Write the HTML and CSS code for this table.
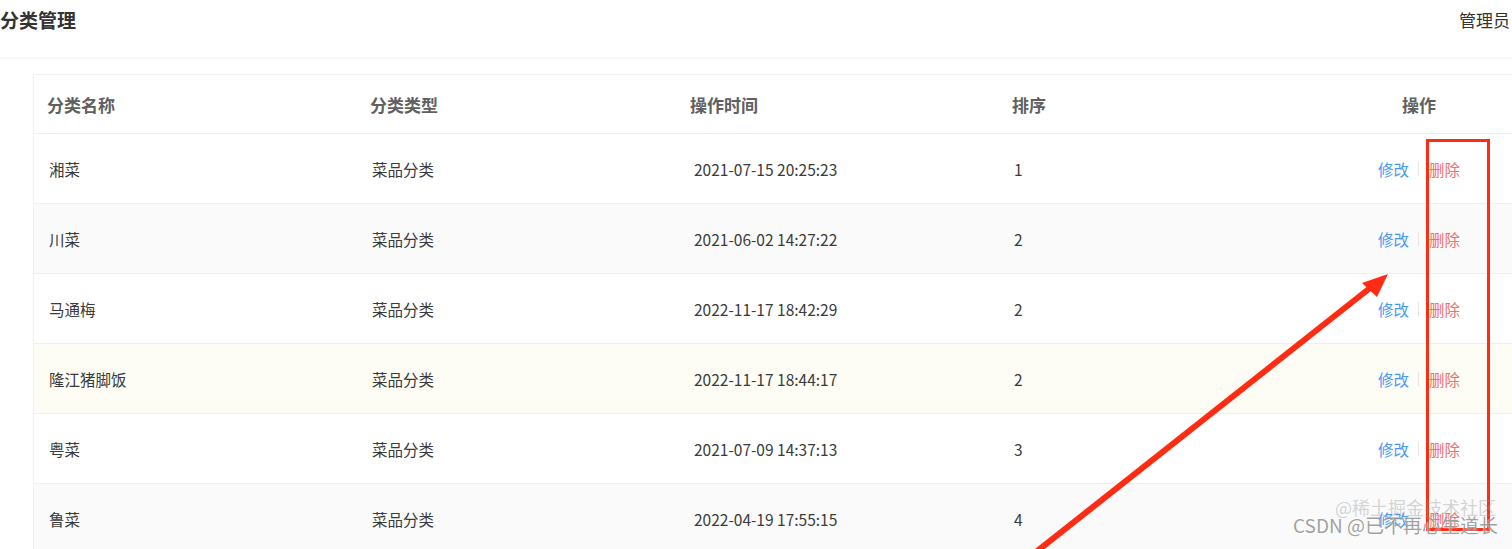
FILE: index.html
```html
<!DOCTYPE html>
<html lang="zh-CN">
<head>
    <meta charset="UTF-8">
    <meta name="viewport" content="width=device-width, initial-scale=1.0">
    <title>分类管理</title>
    <link rel="stylesheet" href="styles.css">
</head>
<body>
    <div class="topbar">
        <h1 class="title">分类管理</h1>
        <span class="user">管理员</span>
    </div>

    <div class="content">
        <div class="table-card">
            <div class="row head">
                <div class="cell">分类名称</div>
                <div class="cell">分类类型</div>
                <div class="cell">操作时间</div>
                <div class="cell">排序</div>
                <div class="cell ops">操作</div>
            </div>
            <div class="row">
                <div class="cell">湘菜</div>
                <div class="cell">菜品分类</div>
                <div class="cell time">2021-07-15 20:25:23</div>
                <div class="cell">1</div>
                <div class="cell ops"><a class="edit">修改</a><span class="sep"></span><a class="del">删除</a></div>
            </div>
            <div class="row stripe">
                <div class="cell">川菜</div>
                <div class="cell">菜品分类</div>
                <div class="cell time">2021-06-02 14:27:22</div>
                <div class="cell">2</div>
                <div class="cell ops"><a class="edit">修改</a><span class="sep"></span><a class="del">删除</a></div>
            </div>
            <div class="row">
                <div class="cell">马通梅</div>
                <div class="cell">菜品分类</div>
                <div class="cell time">2022-11-17 18:42:29</div>
                <div class="cell">2</div>
                <div class="cell ops"><a class="edit">修改</a><span class="sep"></span><a class="del">删除</a></div>
            </div>
            <div class="row hover">
                <div class="cell">隆江猪脚饭</div>
                <div class="cell">菜品分类</div>
                <div class="cell time">2022-11-17 18:44:17</div>
                <div class="cell">2</div>
                <div class="cell ops"><a class="edit">修改</a><span class="sep"></span><a class="del">删除</a></div>
            </div>
            <div class="row">
                <div class="cell">粤菜</div>
                <div class="cell">菜品分类</div>
                <div class="cell time">2021-07-09 14:37:13</div>
                <div class="cell">3</div>
                <div class="cell ops"><a class="edit">修改</a><span class="sep"></span><a class="del">删除</a></div>
            </div>
            <div class="row stripe">
                <div class="cell">鲁菜</div>
                <div class="cell">菜品分类</div>
                <div class="cell time">2022-04-19 17:55:15</div>
                <div class="cell">4</div>
                <div class="cell ops"><a class="edit">修改</a><span class="sep"></span><a class="del">删除</a></div>
            </div>
        </div>
    </div>

    <!-- annotation drawn over the screenshot -->
    <svg class="marks" width="1512" height="549" viewBox="0 0 1512 549">
        <rect x="1427.5" y="140.5" width="61" height="389" fill="none" stroke="#ff2b12" stroke-width="3"/>
        <line x1="1036" y1="552" x2="1370" y2="288" stroke="#ff2b12" stroke-width="6"/>
        <polygon points="1388,274 1362,283 1377,297" fill="#ff2b12"/>
    </svg>

    <div class="watermark">
        <span class="wm-back">@稀土掘金技术社区</span>
        <span class="wm-front">CSDN @已不再心生道长</span>
    </div>
</body>
</html>
```

FILE: styles.css
```css
body {
    margin: 0;
    padding: 0;
    font-family: "Noto Sans CJK SC", "Noto Sans", sans-serif;
    color: #333;
    background: #fff;
    width: 1512px;
    height: 549px;
    overflow: hidden;
    position: relative;
}
.topbar {
    height: 57px;
    display: flex;
    justify-content: space-between;
    align-items: flex-start;
    padding: 7px 2px 0 0;
    box-sizing: border-box;
    background: #fff;
    box-shadow: 0 2px 3px rgba(0,0,0,0.04);
}
.title {
    margin: 0;
    font-size: 19px;
    line-height: 26px;
    font-weight: bold;
    color: #333;
}
.user {
    font-size: 17px;
    line-height: 26px;
    color: #333;
}
.content {
    padding: 17px 0 0 33px;
}
.table-card {
    width: 1520px;
    background: #fff;
    border-top: 1px solid #f2f2f2;
    border-left: 1px solid #f0f0f0;
}
.row {
    display: grid;
    grid-template-columns: 323px 320px 322px 340px 160px 1fr;
    height: 69px;
    align-items: center;
    border-bottom: 1px solid #efefef;
    font-size: 15.5px;
    color: #3a3a3a;
}
.row.head {
    height: 58px;
    font-size: 17px;
    font-weight: bold;
    color: #606060;
}
.row.head .cell {
    padding-left: 13px;
}
.row.stripe {
    background: #fafafa;
}
.row.hover {
    background: #fdfdf6;
}
.cell {
    padding-left: 15px;
    white-space: nowrap;
}
.cell.time {
    padding-left: 17px;
}
.cell.ops, .row.head .cell.ops {
    padding-left: 0;
    text-align: center;
    display: flex;
    justify-content: center;
    align-items: center;
}
.edit {
    color: #4a9af5;
}
.del {
    color: #f26d6d;
}
.sep {
    display: inline-block;
    width: 1px;
    height: 14px;
    background: #e6e6e6;
    margin: 0 10px 0 9px;
}
.marks {
    position: absolute;
    left: 0;
    top: 0;
    pointer-events: none;
}
.watermark {
    position: absolute;
    right: 14px;
    bottom: 11px;
    width: 230px;
    height: 44px;
    font-family: "Noto Sans CJK SC", sans-serif;
    pointer-events: none;
}
.wm-back {
    position: absolute;
    right: 2px;
    top: 0;
    font-size: 18px;
    color: rgba(150,150,150,0.4);
}
.wm-front {
    position: absolute;
    right: 0;
    bottom: 0;
    font-size: 19px;
    color: rgba(120,120,120,0.7);
    text-shadow: 0 0 2px #fff;
}
```
